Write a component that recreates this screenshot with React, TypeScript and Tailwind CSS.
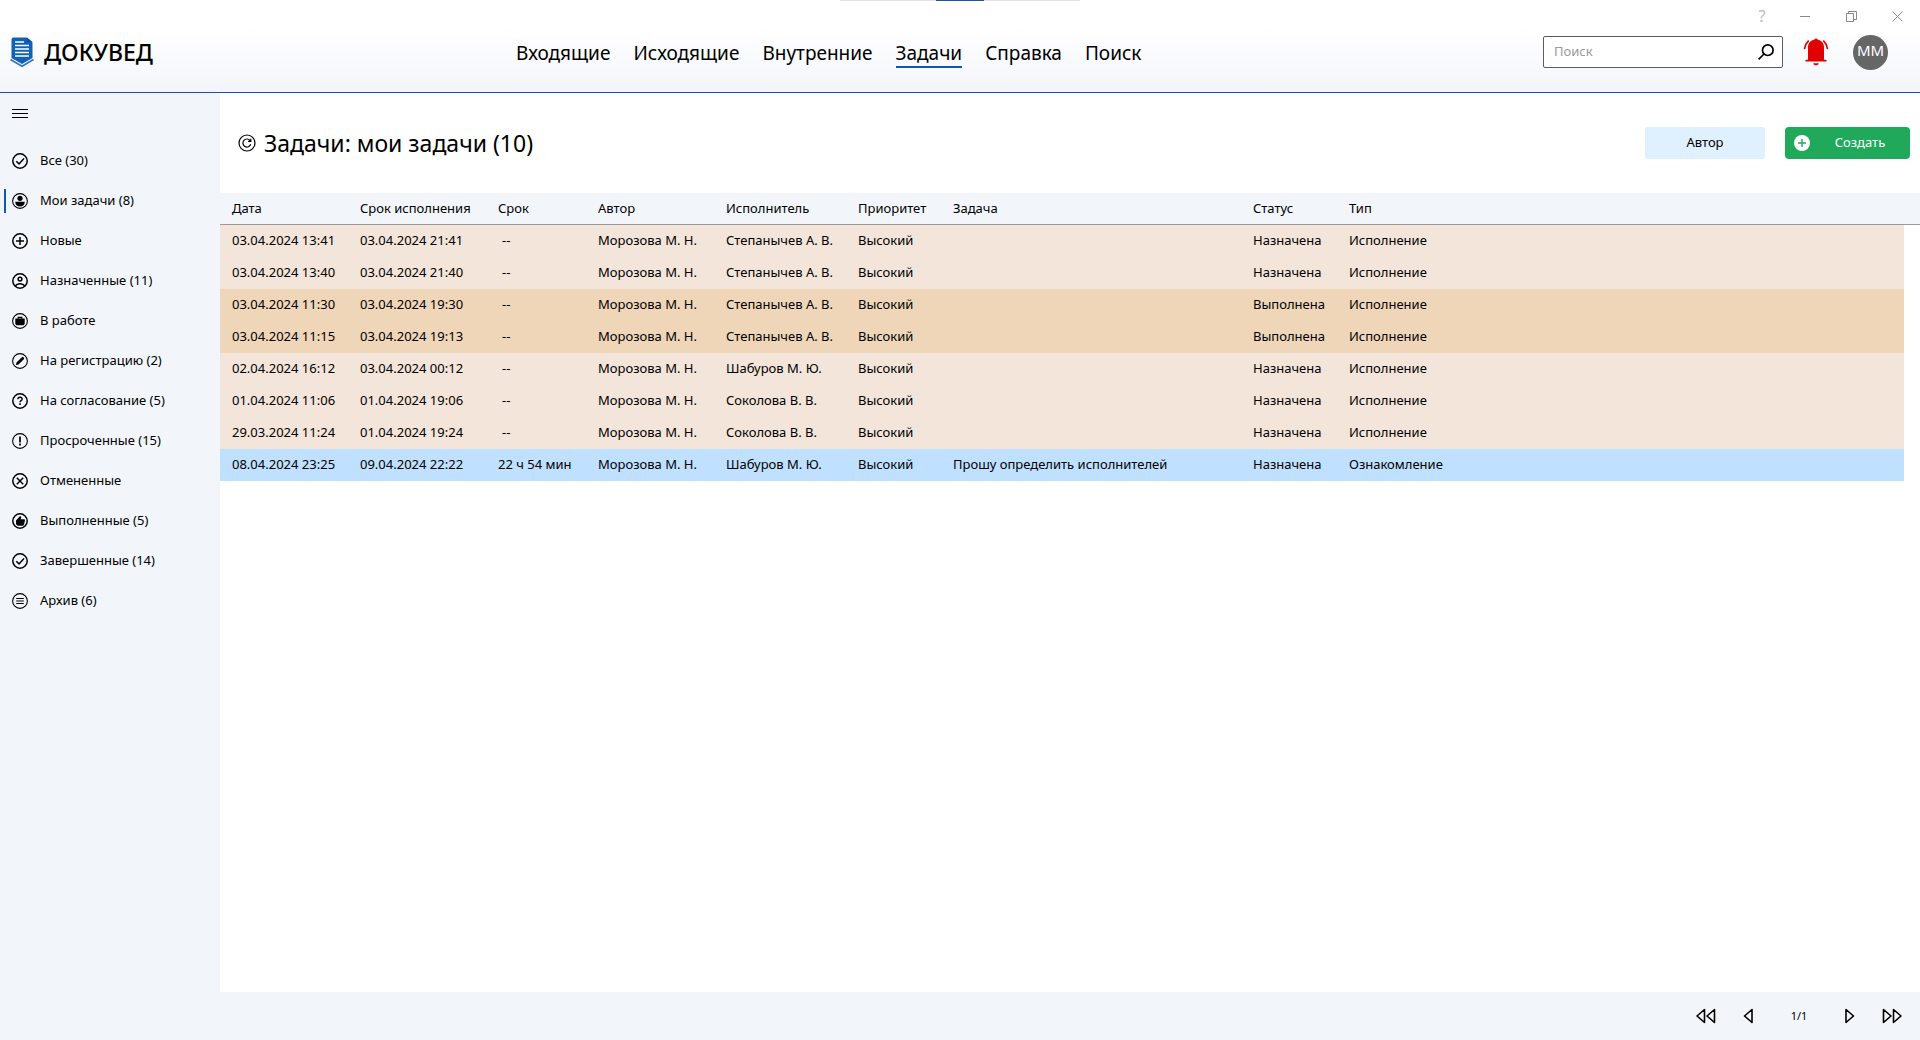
import { useState, type ReactNode } from 'react';
import clsx from 'clsx';

type SidebarItem = {
  id: string;
  label: string;
  icon: ReactNode;
};

type Task = {
  date: string;
  due: string;
  left: string;
  assignee: string;
  subject: string;
  status: string;
  type: string;
};

const navItems = ['Входящие', 'Исходящие', 'Внутренние', 'Задачи', 'Справка', 'Поиск'];

const columns = [
  { title: 'Дата', width: 'w-[128px]' },
  { title: 'Срок исполнения', width: 'w-[138px]' },
  { title: 'Срок', width: 'w-[100px]' },
  { title: 'Автор', width: 'w-[128px]' },
  { title: 'Исполнитель', width: 'w-[132px]' },
  { title: 'Приоритет', width: 'w-[95px]' },
  { title: 'Задача', width: 'w-[300px]' },
  { title: 'Статус', width: 'w-[96px]' },
  { title: 'Тип', width: '' },
];

const tasks: Task[] = [
  { date: '03.04.2024 13:41', due: '03.04.2024 21:41', left: '--', assignee: 'Степанычев А. В.', subject: '', status: 'Назначена', type: 'Исполнение' },
  { date: '03.04.2024 13:40', due: '03.04.2024 21:40', left: '--', assignee: 'Степанычев А. В.', subject: '', status: 'Назначена', type: 'Исполнение' },
  { date: '03.04.2024 11:30', due: '03.04.2024 19:30', left: '--', assignee: 'Степанычев А. В.', subject: '', status: 'Выполнена', type: 'Исполнение' },
  { date: '03.04.2024 11:15', due: '03.04.2024 19:13', left: '--', assignee: 'Степанычев А. В.', subject: '', status: 'Выполнена', type: 'Исполнение' },
  { date: '02.04.2024 16:12', due: '03.04.2024 00:12', left: '--', assignee: 'Шабуров М. Ю.', subject: '', status: 'Назначена', type: 'Исполнение' },
  { date: '01.04.2024 11:06', due: '01.04.2024 19:06', left: '--', assignee: 'Соколова В. В.', subject: '', status: 'Назначена', type: 'Исполнение' },
  { date: '29.03.2024 11:24', due: '01.04.2024 19:24', left: '--', assignee: 'Соколова В. В.', subject: '', status: 'Назначена', type: 'Исполнение' },
  { date: '08.04.2024 23:25', due: '09.04.2024 22:22', left: '22 ч 54 мин', assignee: 'Шабуров М. Ю.', subject: 'Прошу определить исполнителей', status: 'Назначена', type: 'Ознакомление' },
];

function RoundIcon({ children, thin }: { children: ReactNode; thin?: boolean }) {
  return (
    <svg className="size-4 shrink-0" viewBox="0 0 16 16" fill="none" stroke="currentColor" strokeWidth="1.5" aria-hidden="true">
      <circle cx="8" cy="8" r={thin ? 7.4 : 7.2} strokeWidth={thin ? 1.1 : 1.5} />
      {children}
    </svg>
  );
}

const sidebarItems: SidebarItem[] = [
  { id: 'all', label: 'Все (30)', icon: <RoundIcon><path d="M4.3 8.2 7 10.9l5-5.4" /></RoundIcon> },
  {
    id: 'mine',
    label: 'Мои задачи (8)',
    icon: (
      <RoundIcon thin>
        <circle cx="8" cy="5.3" r="2.6" fill="currentColor" stroke="none" />
        <path d="M3.2 8.8h9.6c0 2.9-2 4.8-4.8 4.8s-4.8-1.9-4.8-4.8Z" fill="currentColor" stroke="none" />
      </RoundIcon>
    ),
  },
  { id: 'new', label: 'Новые', icon: <RoundIcon><path d="M8 4v8M4 8h8" /></RoundIcon> },
  {
    id: 'assigned',
    label: 'Назначенные (11)',
    icon: (
      <RoundIcon>
        <circle cx="8" cy="6.1" r="1.9" />
        <path d="M3.5 13c.9-1.6 2.6-2.3 4.5-2.3s3.6.7 4.5 2.3" />
      </RoundIcon>
    ),
  },
  {
    id: 'work',
    label: 'В работе',
    icon: (
      <RoundIcon thin>
        <path d="M3.3 5.6h9.4v5.2l-1.2 1.4h-7l-1.2-1.4Z" fill="currentColor" stroke="none" />
        <path d="M6.2 5.8V4.3h3.6v1.5" strokeWidth="1.2" />
      </RoundIcon>
    ),
  },
  {
    id: 'registration',
    label: 'На регистрацию (2)',
    icon: (
      <RoundIcon thin>
        <path d="m3.9 12.1.6-2.6 5.6-5.6c.6-.6 2.6 1.4 2 2l-5.6 5.6Z" fill="currentColor" stroke="none" />
      </RoundIcon>
    ),
  },
  {
    id: 'approval',
    label: 'На согласование (5)',
    icon: (
      <RoundIcon>
        <path d="M5.9 6.3c0-1.3.9-2 2.1-2s2.1.8 2.1 1.9c0 1.4-2.1 1.5-2.1 3" strokeWidth="1.4" />
        <path d="M8 10.3v1.6" />
      </RoundIcon>
    ),
  },
  { id: 'overdue', label: 'Просроченные (15)', icon: <RoundIcon thin><path d="M8 3.4v6M8 10.6v1.8" strokeWidth="1.7" /></RoundIcon> },
  { id: 'cancelled', label: 'Отмененные', icon: <RoundIcon><path d="m4.8 4.8 6.4 6.4M11.2 4.8l-6.4 6.4" /></RoundIcon> },
  {
    id: 'done',
    label: 'Выполненные (5)',
    icon: (
      <RoundIcon>
        <path d="M4 7.6 7.9 3.2c1-.3 1.5.5 1.3 1.3l-.5 1.8h3.2c.9 0 1.2.7 1 1.4l-.9 3.7c-.2.8-.8 1.3-1.6 1.3H5.800L4 11.300Z" fill="currentColor" stroke="none" />
      </RoundIcon>
    ),
  },
  { id: 'finished', label: 'Завершенные (14)', icon: <RoundIcon><path d="M4.3 8.2 7 10.9l5-5.4" /></RoundIcon> },
  { id: 'archive', label: 'Архив (6)', icon: <RoundIcon thin><path d="M4.2 5.5h7.6M4.2 8h7.6M4.2 10.5h7.6" strokeWidth="1.2" /></RoundIcon> },
];

function Logo() {
  return (
    <svg className="h-[31px] w-6 shrink-0" viewBox="0 0 24 31" aria-hidden="true">
      <path d="M3.5.5h13l6 5v15.5L12 27 1.5 21V2.5a2 2 0 0 1 2-2Z" fill="#0f62b5" />
      <path d="M17 .5v4.5h5.5Z" fill="#0a4f9a" />
      <path d="M5 5h9M5 8.500h14M5 12h14M5 15.500h14M5 19h14" stroke="#fff" strokeWidth="1.4" />
      <path d="M.5 22.500 12 29.200l11.500-6.700" fill="none" stroke="#2f74bd" strokeWidth="1.6" />
    </svg>
  );
}

function Header() {
  return (
    <header className="relative border-b border-[#1b5599] bg-linear-to-b from-white from-30% to-[#f3f5fa]">
      {/* Handle of the docked window */}
      <div className="absolute top-0 left-1/2 flex h-px w-60 -translate-x-1/2 justify-center bg-[#e3e3e3]">
        <div className="h-px w-12 bg-[#1b5599]" />
      </div>

      <div className="flex h-8 justify-end text-[#888]">
        <button type="button" aria-label="Помощь" className="w-10 text-base text-[#bbb]">?</button>
        <button type="button" aria-label="Свернуть" className="flex w-[46px] items-center justify-center">
          <svg className="size-[11px]" viewBox="0 0 11 11" stroke="currentColor"><path d="M0 5.5h10" /></svg>
        </button>
        <button type="button" aria-label="Восстановить" className="flex w-[46px] items-center justify-center">
          <svg className="size-[11px]" viewBox="0 0 11 11" fill="none" stroke="currentColor">
            <path d="M.5 2.5h7v8h-7ZM2.5 2.5v-2h8v8h-3" />
          </svg>
        </button>
        <button type="button" aria-label="Закрыть" className="flex w-[46px] items-center justify-center">
          <svg className="size-[11px]" viewBox="0 0 11 11" stroke="currentColor"><path d="m.5.5 10 10M10.5.5l-10 10" /></svg>
        </button>
      </div>

      <div className="flex h-[60px] items-center pr-8 pb-5">
        <div className="flex w-[516px] shrink-0 items-center gap-[10px] pl-[10px]">
          <Logo />
          <span className="text-[23px] font-medium">ДОКУВЕД</span>
        </div>

        <nav className="mt-1 flex gap-[23px] text-[19px] leading-[26px]">
          {navItems.map((item) => (
            <a
              key={item}
              href="#"
              className={clsx('border-b-2', item === 'Задачи' ? 'border-[#0b5cb0]' : 'border-transparent')}
            >
              {item}
            </a>
          ))}
        </nav>

        <div className="ml-auto flex h-8 w-60 items-center rounded-xs border border-[#5c5c5c] bg-white pr-2 pl-[10px]">
          <input
            type="text"
            aria-label="Поиск"
            placeholder="Поиск"
            className="min-w-0 flex-1 text-[13px] outline-none placeholder:text-[#999]"
          />
          <button type="button" aria-label="Найти">
            <svg className="size-4" viewBox="0 0 16 16" fill="none" stroke="currentColor" strokeWidth="1.7">
              <circle cx="9.8" cy="6.2" r="5.3" />
              <path d="M6 10 .6 15.4" />
            </svg>
          </button>
        </div>
        <button type="button" aria-label="Уведомления" className="mr-6 ml-5">
          <svg className="h-7 w-[26px]" viewBox="0 0 26 28" fill="#e00000">
            <path d="M11.500 1.600c.4-1.500 2.600-1.500 3 0 4 .8 6.500 3.700 6.500 7.900v12.300h2c.9 0 .9 1.700 0 1.700H3c-.9 0-.9-1.700 0-1.700h2V9.500c0-4.200 2.500-7.100 6.500-7.900ZM10.300 25.200h5.400c0 2.800-5.400 2.800-5.400 0Z" />
            <path d="M5.300 3.200C3.400 5 2 7.200 1.600 10.500M20.700 3.200c1.900 1.800 3.300 4 3.700 7.300" fill="none" stroke="#e00000" strokeWidth="1.7" strokeLinecap="round" />
          </svg>
        </button>
        <button type="button" className="size-[35px] rounded-full bg-[#666] pb-1 text-[15px] text-white">ММ</button>
      </div>
    </header>
  );
}

function Sidebar() {
  const [selected, setSelected] = useState('mine');

  return (
    <aside className="w-[220px] shrink-0 bg-[#f2f6fb]">
      <button type="button" aria-label="Меню" className="flex h-10 items-center px-3">
        <svg className="h-[9px] w-4" viewBox="0 0 16 9" stroke="currentColor"><path d="M0 .5h16M0 4.5h16M0 8.5h16" /></svg>
      </button>
      <ul className="mt-2">
        {sidebarItems.map((item) => (
          <li key={item.id}>
            <button
              type="button"
              onClick={() => setSelected(item.id)}
              className="flex h-10 w-full items-center pl-1 text-left text-[13px]"
            >
              <span className={clsx('mr-[6px] h-6 w-[2px]', selected === item.id && 'bg-[#0b5cb0]')} />
              {item.icon}
              <span className="ml-3">{item.label}</span>
            </button>
          </li>
        ))}
      </ul>
    </aside>
  );
}

function rowColor(task: Task) {
  if (task.left !== '--') return 'bg-[#bfe1ff]';
  return task.status === 'Выполнена' ? 'bg-[#efd6b8]' : 'bg-[#f3e5d9]';
}

function TaskTable() {
  return (
    <table className="w-full table-fixed border-separate border-spacing-0 text-left text-[13px] whitespace-nowrap">
      <thead className="bg-[#f2f6fb]">
        <tr className="h-8">
          {columns.map((column) => (
            <th key={column.title} className={clsx('border-b border-[#999] px-3 font-normal', column.width)}>
              {column.title}
            </th>
          ))}
          {/* Scrollbar gutter */}
          <td className="w-4 border-b border-[#999]" />
        </tr>
      </thead>
      <tbody>
        {tasks.map((task) => {
          const cell = clsx('px-3', rowColor(task));
          return (
            <tr key={task.date} className="h-8">
              <td className={cell}>{task.date}</td>
              <td className={cell}>{task.due}</td>
              <td className={cell}>
                <span className={clsx(task.left === '--' && 'pl-1')}>{task.left}</span>
              </td>
              <td className={cell}>Морозова М. Н.</td>
              <td className={cell}>{task.assignee}</td>
              <td className={cell}>Высокий</td>
              <td className={cell}>{task.subject}</td>
              <td className={cell}>{task.status}</td>
              <td className={cell}>{task.type}</td>
              <td />
            </tr>
          );
        })}
      </tbody>
    </table>
  );
}

function Pager() {
  return (
    <footer className="flex h-12 items-center justify-end bg-[#f2f6fb] pr-[18px]">
      <button type="button" aria-label="Первая страница">
        <svg className="h-4 w-5" viewBox="0 0 20 16" fill="none" stroke="currentColor" strokeWidth="1.6" strokeLinejoin="round">
          <path d="M8.5 1.5v13L1 8ZM18.5 1.5v13L11 8Z" />
        </svg>
      </button>
      <button type="button" aria-label="Предыдущая страница" className="ml-[27px]">
        <svg className="h-4 w-[10px]" viewBox="0 0 10 16" fill="none" stroke="currentColor" strokeWidth="1.6" strokeLinejoin="round">
          <path d="M9 1.5v13L1.5 8Z" />
        </svg>
      </button>
      <span className="w-[92px] text-center text-[11px]">1/1</span>
      <button type="button" aria-label="Следующая страница" className="mr-[27px]">
        <svg className="h-4 w-[10px]" viewBox="0 0 10 16" fill="none" stroke="currentColor" strokeWidth="1.6" strokeLinejoin="round">
          <path d="M1 1.5v13L8.5 8Z" />
        </svg>
      </button>
      <button type="button" aria-label="Последняя страница">
        <svg className="h-4 w-5" viewBox="0 0 20 16" fill="none" stroke="currentColor" strokeWidth="1.6" strokeLinejoin="round">
          <path d="M1.5 1.5v13L9 8ZM11.5 1.5v13L19 8Z" />
        </svg>
      </button>
    </footer>
  );
}

export default function App() {
  return (
    <div className="flex min-h-screen flex-col bg-white font-['Noto_Sans','Open_Sans',sans-serif] text-black">
      <Header />
      <div className="flex flex-1">
        <Sidebar />
        <main className="min-w-0 flex-1">
          <div className="flex h-[100px] items-center pr-[10px] pl-[18px]">
            <button type="button" aria-label="Обновить" className="mr-2">
              <svg className="size-[18px]" viewBox="0 0 18 18" fill="none" stroke="currentColor" strokeWidth="1.2">
                <circle cx="9" cy="9" r="8" />
                <path d="M12.7 10.3a4 4 0 1 1-.6-3.7M12.8 4.8v2.6h-2.7" />
              </svg>
            </button>
            <h1 className="text-[23px]">Задачи: мои задачи (10)</h1>
            <button type="button" className="mr-5 ml-auto h-8 w-[120px] rounded-xs bg-[#dff1ff] text-[13px]">Автор</button>
            <button type="button" className="flex h-8 w-[125px] items-center rounded-sm bg-[#21a95b] pl-[9px] text-[13px] text-white">
              <svg className="size-4" viewBox="0 0 16 16" aria-hidden="true">
                <circle cx="8" cy="8" r="8" fill="#fff" />
                <path d="M8 4v8M4 8h8" stroke="#21a95b" strokeWidth="1.4" />
              </svg>
              <span className="flex-1 text-center">Создать</span>
            </button>
          </div>
          <TaskTable />
        </main>
      </div>
      <Pager />
    </div>
  );
}
